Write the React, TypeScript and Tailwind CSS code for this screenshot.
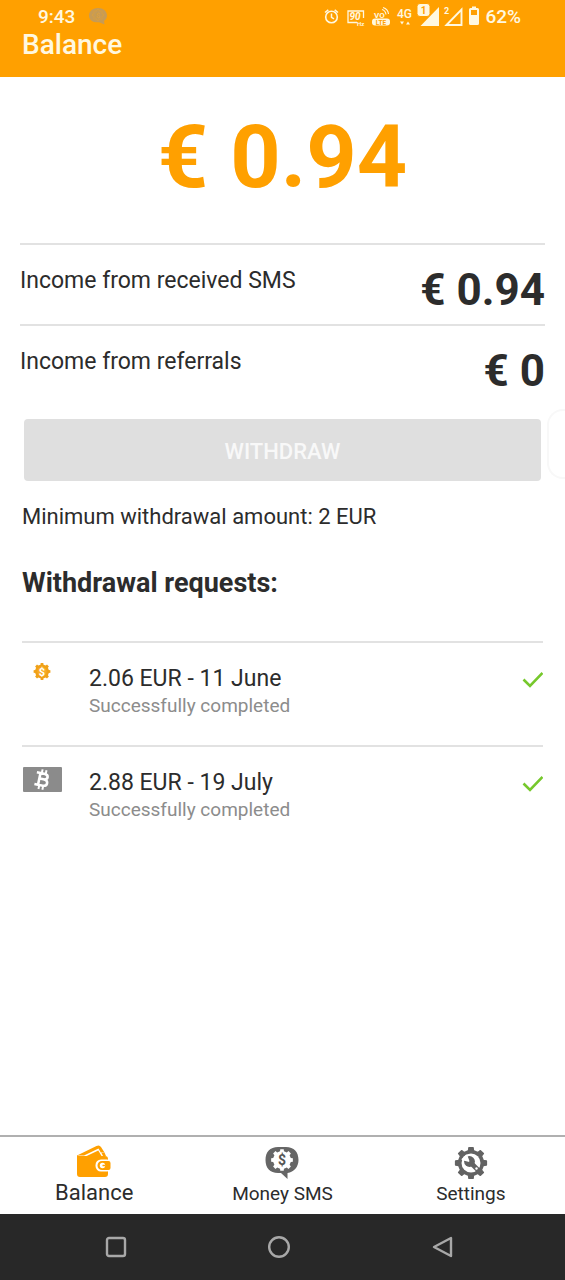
import type { ReactNode } from "react";

type Withdrawal = {
  id: number;
  amount: string;
  date: string;
  status: string;
  method: "sms" | "bitcoin";
};

const withdrawals: Withdrawal[] = [
  { id: 1, amount: "2.06 EUR", date: "11 June", status: "Successfully completed", method: "sms" },
  { id: 2, amount: "2.88 EUR", date: "19 July", status: "Successfully completed", method: "bitcoin" },
];

// closed outline of a cog centred on cx, cy
function cogPath(cx: number, cy: number, outer: number, inner: number, teeth: number, topWidth = 0.2) {
  const step = (Math.PI * 2) / teeth;
  const points: string[] = [];
  for (let i = 0; i < teeth; i++) {
    const mid = i * step - Math.PI / 2;
    const corners: [number, number][] = [
      [mid - step * (topWidth + 0.08), inner],
      [mid - step * topWidth, outer],
      [mid + step * topWidth, outer],
      [mid + step * (topWidth + 0.08), inner],
    ];
    for (const [a, r] of corners) {
      points.push(`${(cx + r * Math.cos(a)).toFixed(2)} ${(cy + r * Math.sin(a)).toFixed(2)}`);
    }
  }
  return `M${points.join("L")}Z`;
}

function NotificationIcon() {
  return (
    <svg className="h-[18px] w-[18px]" viewBox="0 0 18 18" aria-hidden="true">
      <path d="M9 0C4 0 0 3 0 7.500C0 11.500 3 14 7 14.300L10 14.300L15.500 16.500L15 13C17 11.500 18 9.500 18 7.500C18 3 14 0 9 0Z" fill="#c79b55" />
      <path d={cogPath(9, 7, 5.500, 4.500, 8)} fill="none" stroke="#d9a041" />
      <text x="9" y="10" textAnchor="middle" fontSize="8" fontWeight="700" fill="#d9a041">$</text>
    </svg>
  );
}

function StatusIcons() {
  return (
    <svg className="h-[28px] w-[160px]" viewBox="321 3 160 28" fill="none" stroke="#fff8e0" aria-hidden="true">
      <circle cx="331.500" cy="17" r="5.800" strokeWidth="1.600" />
      <path d="M331.500 13.500V17.300L334 18.800M325 12.500L328.300 9.800M338 12.500L334.700 9.800" strokeWidth="1.500" />
      <path d="M357 22.500H348V11H363.500V18" strokeWidth="1.300" />
      <g fill="#fff8e0" stroke="none" fontWeight="500">
        <text x="349.500" y="20" fontSize="10" fontStyle="italic" fontWeight="700">90</text>
        <text x="357" y="25.500" fontSize="6" fontWeight="700">Hz</text>
        <text x="374" y="17.500" fontSize="8" fontWeight="700">VO</text>
        <rect x="372" y="18.500" width="18" height="7" rx="3" />
        <text x="381" y="24.500" fontSize="6.500" fontWeight="700" fill="#ffa000" textAnchor="middle">LTE</text>
        <text x="397" y="18" fontSize="12">4G</text>
        <path d="M400 21.500H404L402 24.500ZM406 24.500H410L408 21.500Z" />
        <path d="M439 7V26H420.500Z" />
        <rect x="417" y="3.500" width="13" height="13" rx="3" stroke="#ffa000" />
        <text x="423.500" y="13.500" fontSize="10" fontWeight="700" fill="#ffa000" textAnchor="middle">1</text>
        <text x="444" y="14" fontSize="9" fontWeight="700">2</text>
        <path d="M470.500 8H472V6.500H476V8H477.500Q479 8 479 9.500V23.500Q479 25 477.500 25H470.500Q469 25 469 23.500V9.500Q469 8 470.500 8ZM471 10V15H477V10Z" fillRule="evenodd" />
      </g>
      <path d="M446.500 25L461.500 9.500V25Z" strokeWidth="1.900" />
      <path d="M382 9.500Q385.500 10.500 386 14.500M383 7.500Q388 9 388.500 14" strokeWidth="1.100" />
    </svg>
  );
}

function CoinIcon() {
  return (
    <svg className="h-[18px] w-[18px]" viewBox="0 0 18 18" aria-hidden="true">
      <path d={cogPath(9, 8.500, 8.500, 7, 8, 0.200)} fill="#f0a118" />
      <circle cx="9" cy="8.500" r="4.600" fill="#f8ad25" />
      <text x="9" y="12.500" textAnchor="middle" fontSize="11" fontWeight="700" fill="#fff">$</text>
    </svg>
  );
}

function BitcoinIcon() {
  return (
    <svg className="h-[25px] w-[39px]" viewBox="0 0 39 25" aria-hidden="true">
      <rect width="39" height="25" rx="1" fill="#8b8b8b" />
      <g transform="translate(19 12.500) rotate(12)" fill="none" stroke="#fff">
        <path d="M-6.500 -6H1C6.500 -6 6 -0.500 1.500 -0.500H-2.500M1.500 -0.500C7.500 0 7 6 1 6H-6.500M-2.800 -6V6" strokeWidth="2.600" />
        <path d="M-1.500 -10V-6M2.500 -10V-6M-1.500 6V10M2.500 6V10" strokeWidth="2" />
      </g>
    </svg>
  );
}

function CheckIcon() {
  return (
    <svg className="h-[18px] w-[22px]" viewBox="0 0 22 18" fill="none" stroke="#76c82c" strokeWidth="2.600" aria-hidden="true">
      <path d="M2.500 8.500L9 15L21.500 2" />
    </svg>
  );
}

function WalletIcon() {
  return (
    <svg className="h-[34px] w-[36px]" viewBox="0 0 36 34" aria-hidden="true">
      <path d="M1 10.500L20.500 1Q23.500 -0.500 25 2L28.500 7.500H24.800L22.500 3.500L8 10.500Z" fill="#ffa000" />
      <path d="M8.500 12L22.300 5.500L25.500 11Z" fill="#ffa000" />
      <path d="M25.500 8L28.500 7.500L30 11H27Z" fill="#ffa000" />
      <path d="M1 10Q2 11 4 11H29Q32 11 32 14V29Q32 32 29 32H4Q1 32 1 29Z" fill="#ffa000" />
      <rect x="19.500" y="14.500" width="17" height="12" rx="5.500" fill="#fff" />
      <path d="M26 16H32.500Q34.500 16 34.500 18V23Q34.500 25 32.500 25H26A4.500 4.500 0 0 1 26 16Z" fill="#ffa000" />
      <circle cx="26.500" cy="20.500" r="2.700" fill="#fff" />
      <path d="M26.500 20.500H29.500" stroke="#ffa000" strokeWidth="1.500" />
    </svg>
  );
}

function MoneySmsIcon() {
  return (
    <svg className="h-[34px] w-[34px]" viewBox="0 0 34 34" aria-hidden="true">
      <path d="M13 2H21C29 2 33.500 7 33.500 15C33.500 22 29 27 22.500 28V34L16 28H13C5 28 0.500 23 0.500 15C0.500 7 5 2 13 2Z" fill="#666" />
      <path d={cogPath(17, 15, 11, 9, 8, 0.200)} fill="#fff" />
      <text x="17" y="20" textAnchor="middle" fontSize="14" fontWeight="700" fill="#555">$</text>
    </svg>
  );
}

function SettingsIcon() {
  return (
    <svg className="h-[34px] w-[34px]" viewBox="0 0 34 34" aria-hidden="true">
      <path d={cogPath(17, 18, 15.500, 12.500, 8, 0.170)} fill="#636363" stroke="#636363" strokeWidth="1.500" strokeLinejoin="round" />
      <circle cx="17" cy="18" r="9.500" fill="#fff" />
      <path d="M16 17L26 27" stroke="#636363" strokeWidth="4.600" />
      <circle cx="15.500" cy="16.500" r="5.400" fill="#636363" />
      <path d="M14.500 16L8.500 14.500L12.500 10.500Z" fill="#fff" stroke="#fff" strokeWidth="1.800" strokeLinejoin="round" />
      <circle cx="22.500" cy="23.500" r="1.200" fill="#fff" />
    </svg>
  );
}

function IncomeRow({ label, value }: { label: string; value: string }) {
  return (
    <div className="flex h-[81px] items-start justify-between border-t-2 border-[#e2e2e2]">
      <span className="pt-[22px] text-[23px] leading-7">{label}</span>
      <span className="pt-[19px] text-[44px] leading-[52px] font-bold">{value}</span>
    </div>
  );
}

function WithdrawalRow({ item }: { item: Withdrawal }) {
  return (
    <li className="flex h-[104px] border-t-2 border-[#e2e2e2]">
      <div className="flex w-10 shrink-0 justify-center pt-5">
        {item.method === "sms" ? <CoinIcon /> : <BitcoinIcon />}
      </div>
      <div className="flex-1 pt-[22px] pl-[27px]">
        <p className="text-[23px] leading-7">
          {item.amount} - {item.date}
        </p>
        <p className="text-[19px] leading-[26px] text-[#8c8c8c]">{item.status}</p>
      </div>
      <div className="pt-7">
        <CheckIcon />
      </div>
    </li>
  );
}

function Tab({ label, icon, active = false }: { label: string; icon: ReactNode; active?: boolean }) {
  return (
    <button type="button" aria-current={active ? "page" : undefined} className="flex flex-col items-center pt-2">
      {icon}
      <span className={active ? "text-[22px] leading-7" : "text-[19px] leading-[30px]"}>{label}</span>
    </button>
  );
}

export default function App() {
  return (
    <div className="flex min-h-screen flex-col bg-white font-[Roboto,sans-serif] text-[#2c2c2c]">
      <header className="h-[77px] bg-[#ffa000] text-[#fff8e0]">
        <div className="flex h-8 items-center justify-between pt-0.5 pr-11 pl-[38px] text-[19px] font-medium">
          <div className="flex items-center gap-3.5">
            <span>9:43</span>
            <NotificationIcon />
          </div>
          <div className="flex items-center gap-1">
            <StatusIcons />
            <span>62%</span>
          </div>
        </div>
        <h1 className="pl-[22px] text-[28px] leading-[26px] font-medium">Balance</h1>
      </header>

      <main className="flex-1 px-5">
        <p className="pt-7 pb-[34px] text-center text-[88px] leading-[104px] font-bold text-[#ffa000]">€ 0.94</p>

        <IncomeRow label="Income from received SMS" value="€ 0.94" />
        <IncomeRow label="Income from referrals" value="€ 0" />

        <div className="relative pt-[14px]">
          <button
            type="button"
            disabled
            className="mx-1 flex h-[62px] w-[calc(100%-8px)] items-center justify-center rounded bg-[#dfdfdf] pt-0.5 text-[22px] font-medium text-[#f8f8f8]"
          >
            WITHDRAW
          </button>
          {/* edge panel handle */}
          <div className="absolute top-1 -right-5 h-[70px] w-[18px] rounded-l-2xl border-2 border-r-0 border-[#f8f8f8]" />
        </div>

        <section className="px-0.5">
          <p className="pt-[22px] text-[22px] leading-7">Minimum withdrawal amount: 2 EUR</p>
          <h2 className="pt-9 pb-[42px] text-[27px] leading-8 font-bold">Withdrawal requests:</h2>
          <ul>
            {withdrawals.map((item) => (
              <WithdrawalRow key={item.id} item={item} />
            ))}
          </ul>
        </section>
      </main>

      <nav className="grid h-[79px] grid-cols-3 items-start border-t-2 border-[#b0b0b0]">
        <Tab label="Balance" icon={<WalletIcon />} active />
        <Tab label="Money SMS" icon={<MoneySmsIcon />} />
        <Tab label="Settings" icon={<SettingsIcon />} />
      </nav>

      <div className="grid h-[66px] grid-cols-3 items-center justify-items-center bg-[#282828] pr-10 pl-[34px]">
        <button type="button" aria-label="Recent apps">
          <svg className="h-6 w-6" viewBox="0 0 24 24" fill="none" stroke="#a8a8a8" strokeWidth="2.400">
            <rect x="3" y="3" width="18" height="18" rx="2" />
          </svg>
        </button>
        <button type="button" aria-label="Home">
          <svg className="h-6 w-6" viewBox="0 0 24 24" fill="none" stroke="#a8a8a8" strokeWidth="2.400">
            <circle cx="12" cy="12" r="9.800" />
          </svg>
        </button>
        <button type="button" aria-label="Back">
          <svg className="h-6 w-6" viewBox="0 0 24 24" fill="none" stroke="#a8a8a8" strokeWidth="2.400" strokeLinejoin="round">
            <path d="M20 3V21L3 12Z" />
          </svg>
        </button>
      </div>
    </div>
  );
}
